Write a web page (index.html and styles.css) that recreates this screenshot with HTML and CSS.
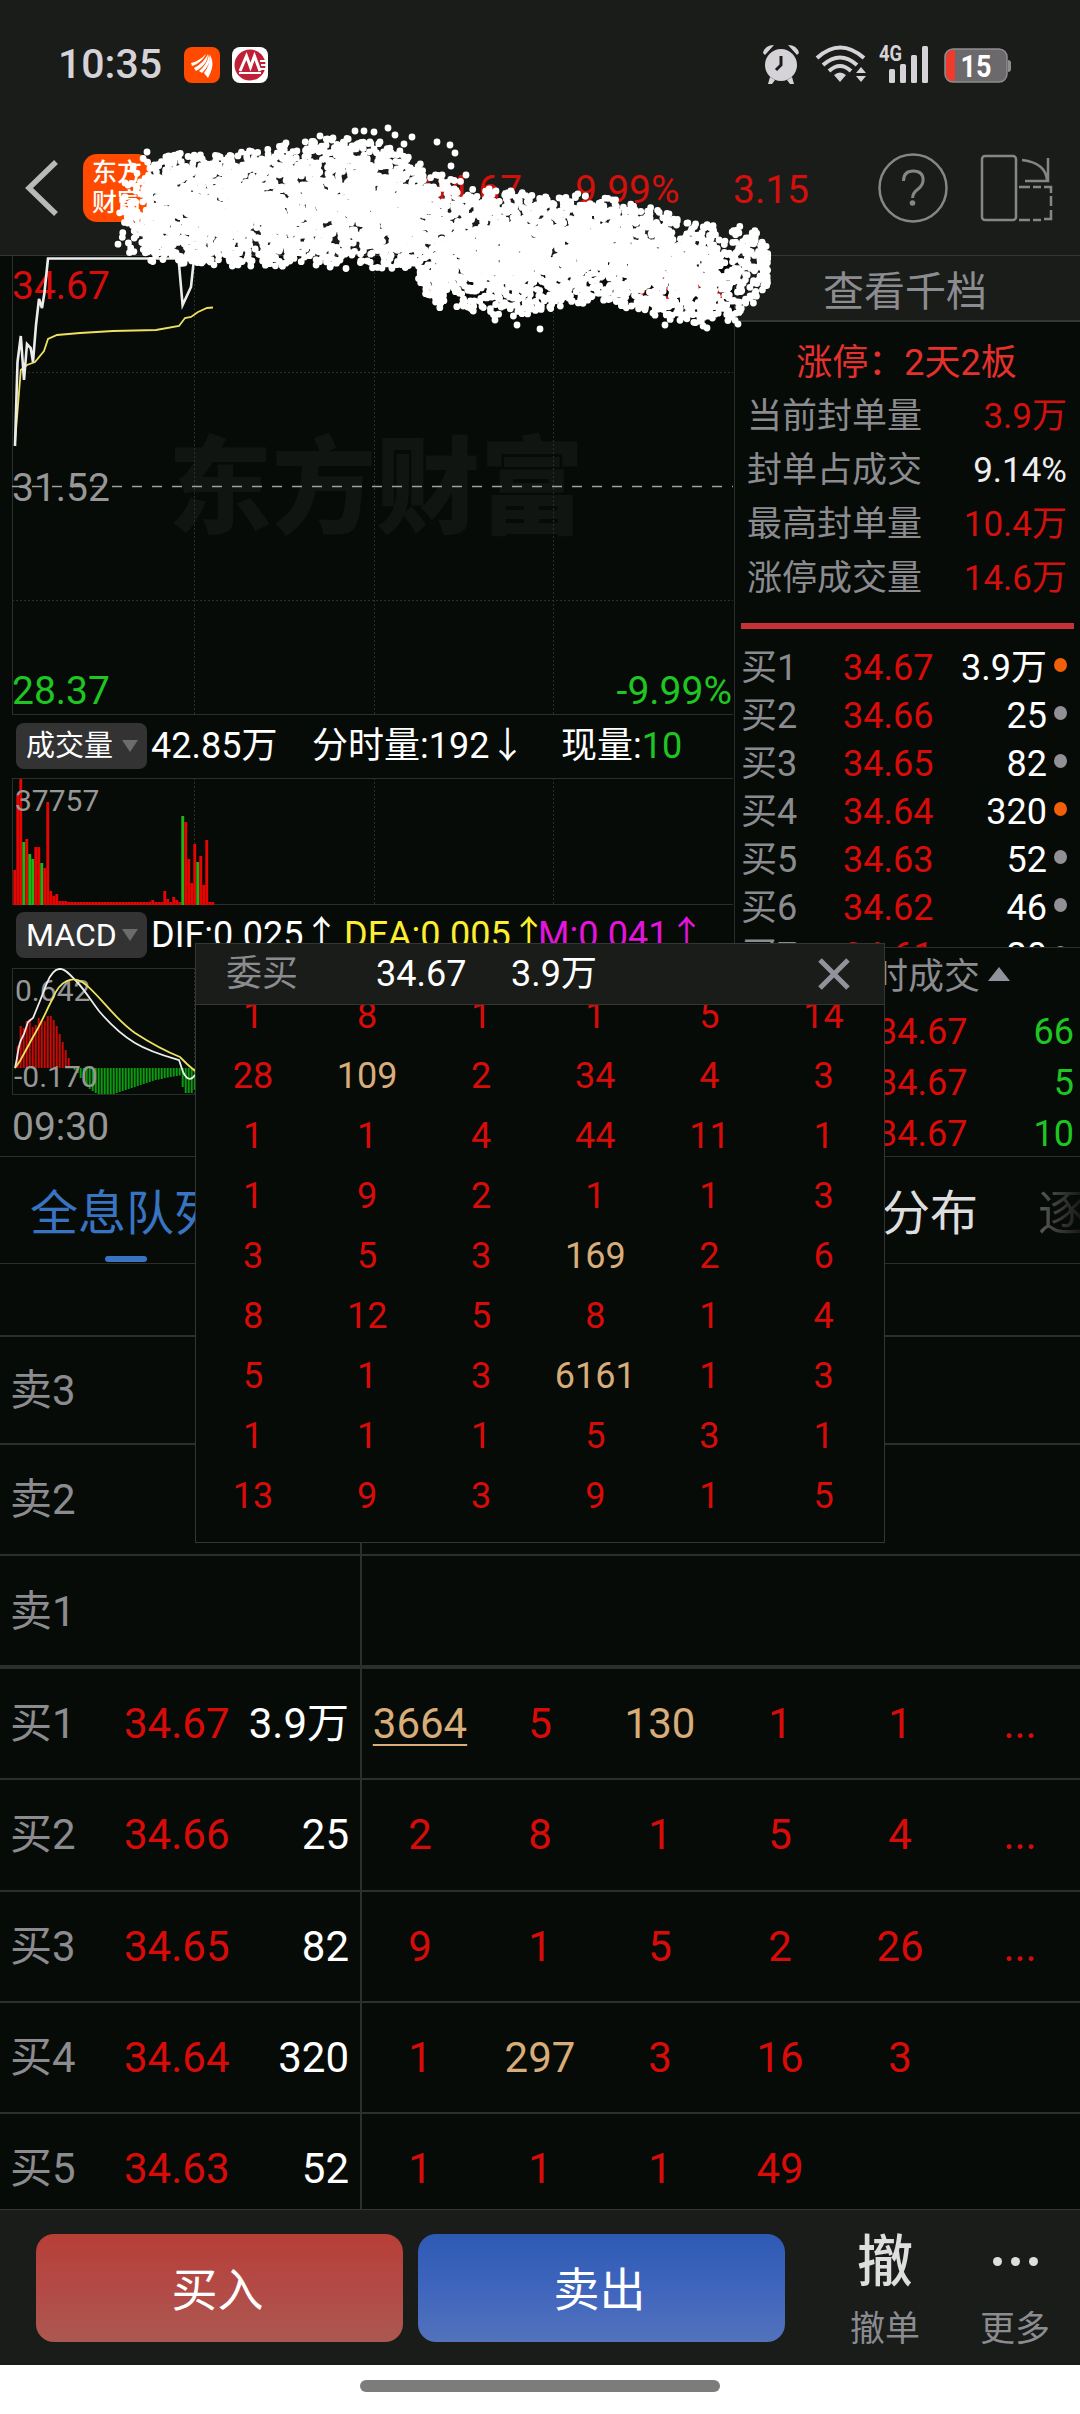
FILE: index.html
```html
<!DOCTYPE html>
<html lang="zh-CN">
<head>
  <meta charset="UTF-8" />
  <meta name="viewport" content="width=device-width, initial-scale=1.0"/>
  <title>东方财富 - 分时</title>
  <link rel="stylesheet" href="styles.css">
</head>
<body>
<div class="screen">

  <div class="status">
    <span class="time">10:35</span>
    <svg class="app-icon" width="36" height="36" viewBox="0 0 36 36">
      <rect width="36" height="36" rx="8" fill="#ff4a00"/>
      <path fill="#fff" d="M7 16c5-1 10-4 15-9-3 6-8 10-14 12zM10 21c6-3 11-8 14-14 0 7-5 13-12 17zM15 24c5-4 9-10 10-17 2 7-1 13-7 19zM20 26c4-5 6-11 6-18 4 7 3 14-2 23z"/>
    </svg>
    <svg class="app-icon" width="36" height="36" viewBox="0 0 36 36">
      <rect width="36" height="36" rx="8" fill="#fff"/>
      <circle cx="18" cy="18" r="15.500" fill="#c01f38"/>
      <path d="M8 24L14.500 9 18.500 20 22.500 9 28 24" fill="none" stroke="#fff" stroke-width="3"/>
      <path d="M7 26h22M28 14h6M29 18h5M28 22h6" stroke="#fff" stroke-width="1.800"/>
    </svg>
    <div class="status-right">
      <svg width="38" height="40" viewBox="0 0 38 40" fill="#d6d3d8">
        <circle cx="19" cy="21" r="16"/>
        <path d="M1 9Q3 1 12 1L3 11zM37 9Q35 1 26 1l9 10zM8 33l5 3-3 4H6zM30 33l-5 3 3 4h4z"/>
        <path d="M19 12v9l-5 5" fill="none" stroke="#191c19" stroke-width="3"/>
      </svg>
      <svg width="52" height="40" viewBox="0 0 52 40" fill="none" stroke="#d6d3d8" stroke-width="4">
        <path d="M2 14Q25-7 49 14M8 21q17-15 34 0M14 27q11-10 22 0"/>
        <path d="M19 31q6-5 12 0l-6 7zM41 29l5-6 5 6zM41 32h10l-5 6z" fill="#d6d3d8" stroke="none"/>
      </svg>
      <svg width="50" height="40" viewBox="0 0 50 40" fill="#d6d3d8">
        <rect x="10" y="25" width="6" height="14" rx="1.500"/>
        <rect x="21" y="20" width="6" height="19" rx="1.500"/>
        <rect x="32" y="11" width="6" height="28" rx="1.500"/>
        <rect x="43" y="2" width="6" height="37" rx="1.500"/>
        <text x="0" y="17" font-size="22" font-weight="700" textLength="23" lengthAdjust="spacingAndGlyphs">4G</text>
      </svg>
      <svg class="battery" width="68" height="36" viewBox="0 0 68 36">
        <rect x="1" y="1" width="62" height="33" rx="8" fill="#6b696c" stroke="#8f8d90" stroke-width="1.500"/>
        <path d="M11 2H9a7 7 0 0 0-7 7v17a7 7 0 0 0 7 7h2z" fill="#f03a2c"/>
        <path d="M64 12q3 0 3 3v6q0 3-3 3z" fill="#8f8d90"/>
        <text x="32" y="29" font-size="31" font-weight="700" fill="#fff" text-anchor="middle" textLength="31" lengthAdjust="spacingAndGlyphs">15</text>
      </svg>
    </div>
  </div>

  <header class="header">
    <svg class="back" width="34" height="58" viewBox="0 0 34 58"><path d="M31 3L4 29l27 26" fill="none" stroke="#b9b9b9" stroke-width="5.500"/></svg>
    <div class="logo">东方<br>财富</div>
    <span class="quote price">34.67</span>
    <span class="quote percent">9.99%</span>
    <span class="quote change">3.15</span>
    <svg class="help" width="70" height="72" viewBox="0 0 70 72" fill="none" stroke="#868686" stroke-width="2.500">
      <circle cx="35" cy="36" r="33.500"/>
      <path d="M25.500 29q0-10 9.800-10t9.800 9q0 5-5 9-5.500 4-5.500 9" stroke-width="3"/>
      <circle cx="34.500" cy="51" r="2.800" fill="#868686" stroke="none"/>
    </svg>
    <svg class="rotate" width="76" height="72" viewBox="0 0 76 72" fill="none" stroke="#868686" stroke-width="2.500">
      <rect x="3" y="4" width="34" height="64" rx="3"/>
      <path d="M43 8q25 3 25 22M69 6v23H46"/>
      <path d="M40 35h11M54 35h8M65 35h7v6M72 44v10M72 58v9h-7M62 68h-8M51 68H40"/>
    </svg>
  </header>

  <main class="market">
    <section class="charts">
      <svg class="price-chart" width="735" height="460">
        <text class="watermark" x="168" y="269" textLength="416" lengthAdjust="spacingAndGlyphs">东方财富</text>
        <g class="grid">
          <path d="M12.500 0V459M12 458.500H733"/>
          <path class="dots" d="M194.500 0V458M374.500 0V458M553.500 0V458M12 116.500H733M12 344.500H733"/>
        </g>
        <path d="M12 230.500H733" stroke="#a0a0a0" stroke-width="1.500" stroke-dasharray="10 10"/>
        <polyline class="avg" points="15,187 20.800,114 27,109 35,106 44,95 48,83 57,79 80,77 113,75 156,74 179,70 185,62 191,61 198,56 207,52 213,51.500"/>
        <text x="12" y="43" class="up">34.67</text>
        <text x="731" y="43" class="up" text-anchor="end">9.99%</text>
        <text x="12" y="245" class="flat">31.52</text>
        <text x="12" y="448" class="down">28.37</text>
        <text x="732" y="448" class="down" text-anchor="end">-9.99%</text>
        <polyline class="line" points="15,190 17.500,106 20.800,80 24,124 27,88 30.700,92 33,106 36,69 39,43 42,52 44.400,37 48,2.500 178.500,2.500 182.600,49 191,31 194,2.500 212,2.500"/>
      </svg>
      <div class="info">
        <span class="picker">成交量<i></i></span>
        <span class="vol-total">42.85万</span>
        <span class="vol-min">分时量:192↓</span>
        <span>现量:<b class="green">10</b></span>
      </div>
      <svg class="sub-chart" width="735" height="128">
        <g class="grid">
          <path d="M12.500 0V127M12 .5H733M12 126.500H733"/>
          <path class="dots" d="M194.500 0V127M374.500 0V127M553.500 0V127"/>
        </g>
        <g id="volBars"></g>
        <text x="15" y="33" class="flat">37757</text>
      </svg>
      <div class="info info-macd">
        <span class="picker picker-latin">MACD<i></i></span>
        <span class="dif">DIF:0.025↑</span>
        <span class="dea">DEA:0.005↑</span>
        <span class="macd">M:0.041↑</span>
      </div>
      <svg class="sub-chart" width="735" height="128">
        <g class="grid">
          <path d="M12.500 0V127M12 .5H733M12 126.500H733"/>
          <path class="dots" d="M194.500 0V127"/>
        </g>
        <g id="macdBars"></g>
        <text x="15" y="33" class="flat">0.642</text>
        <text x="14" y="119" class="flat">-0.170</text>
        <path class="line thin" d="M15 100C18 88 18 76 22 70L24 66 28 54 33 50C38 38 42 28 47 15 51 5 55 1 60 .8 66 1 71 8 77 14 83 20 90 31 99 43 110 56 120 66 135 75 150 84 165 88 179 92L183 104C187 112 191 113 195 107"/>
        <path class="avg thin" d="M15 100L20 93 33 69C42 54 47 41 53 30 60 12 73 8 82 14 96 22 112 49 135 65 152 76 165 83 180 89L187 96 195 103"/>
      </svg>
      <div class="axis">09:30</div>
    </section>

    <aside class="side">
      <div class="depth-btn">查看千档</div>
      <div class="limit-title">涨停：2天2板</div>
      <dl class="limit">
        <div><dt>当前封单量</dt><dd>3.9万</dd></div>
        <div><dt>封单占成交</dt><dd class="white">9.14%</dd></div>
        <div><dt>最高封单量</dt><dd>10.4万</dd></div>
        <div><dt>涨停成交量</dt><dd>14.6万</dd></div>
      </dl>
      <div class="red-bar"></div>
      <div class="bids">
        <div class="bid"><span>买1</span><em>34.67</em><b>3.9万</b><i class="hot"></i></div>
        <div class="bid"><span>买2</span><em>34.66</em><b>25</b><i></i></div>
        <div class="bid"><span>买3</span><em>34.65</em><b>82</b><i></i></div>
        <div class="bid"><span>买4</span><em>34.64</em><b>320</b><i class="hot"></i></div>
        <div class="bid"><span>买5</span><em>34.63</em><b>52</b><i></i></div>
        <div class="bid"><span>买6</span><em>34.62</em><b>46</b><i></i></div>
        <div class="bid"><span>买7</span><em>34.61</em><b>20</b><i></i></div>
      </div>
      <div class="trades-title">分时成交<i></i></div>
      <div class="trade"><em>34.67</em><b>66</b></div>
      <div class="trade"><em>34.67</em><b>5</b></div>
      <div class="trade"><em>34.67</em><b>10</b></div>
    </aside>
  </main>

  <nav class="tabs">
    <span class="tab active">全息队列</span>
    <span class="tab second">分布</span>
    <span class="tab faded">逐笔</span>
  </nav>

  <section class="queue">
    <div class="row row-cut"><div class="left"></div></div>
    <div class="row sell3"><div class="left"><span>卖3</span></div></div>
    <div class="row"><div class="left"><span>卖2</span></div></div>
    <div class="row last-sell"><div class="left"><span>卖1</span></div></div>
    <div class="row">
      <div class="left"><span>买1</span><em>34.67</em><b>3.9万</b></div>
      <div class="cells"><u class="big">3664</u><span>5</span><span class="big">130</span><span>1</span><span>1</span><span>...</span></div>
    </div>
    <div class="row">
      <div class="left"><span>买2</span><em>34.66</em><b>25</b></div>
      <div class="cells"><span>2</span><span>8</span><span>1</span><span>5</span><span>4</span><span>...</span></div>
    </div>
    <div class="row">
      <div class="left"><span>买3</span><em>34.65</em><b>82</b></div>
      <div class="cells"><span>9</span><span>1</span><span>5</span><span>2</span><span>26</span><span>...</span></div>
    </div>
    <div class="row">
      <div class="left"><span>买4</span><em>34.64</em><b>320</b></div>
      <div class="cells"><span>1</span><span class="big">297</span><span>3</span><span>16</span><span>3</span></div>
    </div>
    <div class="row">
      <div class="left"><span>买5</span><em>34.63</em><b>52</b></div>
      <div class="cells"><span>1</span><span>1</span><span>1</span><span>49</span></div>
    </div>
  </section>

  <footer class="toolbar">
    <button class="buy">买入</button>
    <button class="sell">卖出</button>
    <div class="tool"><span class="glyph">撤</span><span>撤单</span></div>
    <div class="tool more"><span class="glyph"><i></i><i></i><i></i></span><span>更多</span></div>
  </footer>
  <div class="home"><i></i></div>

  <div class="popup">
    <div class="popup-head">
      <span class="popup-title">委买</span>
      <span class="popup-price">34.67</span>
      <span>3.9万</span>
      <svg class="close" width="34" height="34" viewBox="0 0 34 34"><path d="M3 3l28 28M31 3L3 31" stroke="#92939a" stroke-width="5"/></svg>
    </div>
    <div class="popup-body">
      <span>1</span><span>8</span><span>1</span><span>1</span><span>5</span><span>14</span>
      <span>28</span><span class="big">109</span><span>2</span><span>34</span><span>4</span><span>3</span>
      <span>1</span><span>1</span><span>4</span><span>44</span><span>11</span><span>1</span>
      <span>1</span><span>9</span><span>2</span><span>1</span><span>1</span><span>3</span>
      <span>3</span><span>5</span><span>3</span><span class="big">169</span><span>2</span><span>6</span>
      <span>8</span><span>12</span><span>5</span><span>8</span><span>1</span><span>4</span>
      <span>5</span><span>1</span><span>3</span><span class="big">6161</span><span>1</span><span>3</span>
      <span>1</span><span>1</span><span>1</span><span>5</span><span>3</span><span>1</span>
      <span>13</span><span>9</span><span>3</span><span>9</span><span>1</span><span>5</span>
    </div>
  </div>

  <svg class="spray" width="1080" height="360"><path id="spray" /></svg>
</div>
<script src="script.js"></script>
</body>
</html>
```

FILE: styles.css
```css
* {
  box-sizing: border-box;
}

body {
  margin: 0;
  background: #070b07;
  color: #fff;
  font-family: Roboto, "Noto Sans CJK SC", sans-serif;
  font-size: 36px;
}

.screen {
  position: relative;
  width: 1080px;
  height: 2414px;
  overflow: hidden;
  display: flex;
  flex-direction: column;
}

i, em {
  font-style: normal;
}

b {
  font-weight: 400;
}

svg text {
  font-family: Roboto, "Noto Sans CJK SC", sans-serif;
}

/* status bar */
.status {
  height: 120px;
  padding: 10px 69px 0 58px;
  display: flex;
  align-items: center;
  background: #191c19;
}

.time {
  width: 126px;
  font-size: 41px;
  line-height: 48px;
  font-weight: 500;
  color: #d6d3d8;
  padding-bottom: 2px;
}

.app-icon {
  margin-right: 12px;
}

.status-right {
  display: flex;
  align-items: center;
  margin-left: auto;
  margin-top: -2px;
  gap: 15px;
}

.status-right svg:nth-child(3) {
  margin-left: -3px;
}

.battery {
  margin: 4px -1px 0 0;
}

/* header */
.header {
  height: 137px;
  padding: 1px 22px 0 25px;
  display: flex;
  align-items: center;
  background: #191c19;
  border-bottom: 1px solid #343634;
}

.logo {
  width: 68px;
  height: 68px;
  margin-left: 24px;
  padding: 4px 9px;
  border-radius: 14px;
  background: #ff4a00;
  font-size: 25px;
  line-height: 30px;
  font-weight: 500;
  white-space: nowrap;
}

.quote {
  color: #d2100c;
  font-size: 39px;
  padding-top: 5px;
  width: 151px;
}

.quote.price {
  margin-left: 273px;
}

.quote.percent {
  width: 158px;
}

.help {
  margin-left: auto;
}

.rotate {
  margin-left: 31px;
  margin-right: 3px;
}

.quote.change {
  width: 90px;
}

/* charts */
.market {
  display: flex;
  height: 901px;
  border-bottom: 1px solid #2c2e2c;
}

.charts {
  width: 735px;
  border-right: 1px solid #2c2e2c;
}

.charts svg {
  display: block;
}

.price-chart text {
  font-size: 39px;
}

.price-chart .watermark {
  font-size: 106px;
  font-weight: 900;
  fill: #111511;
}

.grid path {
  fill: none;
  stroke: #2c2e2c;
}

.grid .dots {
  stroke-dasharray: 2 2;
}

.up {
  fill: #d50e0b;
}

.flat {
  fill: #979797;
}

.down {
  fill: #1fc622;
}

.line {
  fill: none;
  stroke: #ececec;
  stroke-width: 2.6;
}

.avg {
  fill: none;
  stroke: #eee060;
  stroke-width: 1.8;
}

.thin {
  stroke-width: 1.8;
}

.info {
  height: 62px;
  padding: 0 0 2px 16px;
  display: flex;
  align-items: center;
  line-height: 60px;
  white-space: nowrap;
}

.info-macd {
  padding-bottom: 5px;
}

.picker {
  width: 131px;
  height: 46px;
  margin-right: 4px;
  padding-left: 10px;
  border-radius: 8px;
  background: #333;
  font-size: 29px;
  line-height: 46px;
  display: flex;
  align-items: center;
  flex: none;
}

.picker-latin {
  font-size: 32px;
}

.picker i {
  margin-left: auto;
  margin-right: 9px;
  border: 8px solid transparent;
  border-top: 12px solid #6a6d6a;
  border-bottom: 0;
}

.vol-total {
  width: 161px;
}

.vol-min {
  width: 249px;
}

.green {
  color: #1fc622;
}

.sub-chart text {
  font-size: 30px;
}

.dif {
  width: 193px;
}

.dea {
  width: 194px;
  color: #fdee30;
}

.macd {
  color: #e414dc;
}

.axis {
  padding-left: 12px;
  font-size: 39px;
  line-height: 63px;
  color: #979797;
}

/* right column */
.side {
  width: 345px;
}

.depth-btn {
  height: 66px;
  background: #191c19;
  border-bottom: 2px solid #343634;
  color: #8b8b90;
  font-size: 41px;
  line-height: 72px;
  text-align: center;
  padding-right: 5px;
}

.limit-title {
  padding: 14px 2px 0 0;
  color: #e5302c;
  line-height: 54px;
  text-align: center;
  height: 68px;
}

.limit {
  margin: 0;
  font-size: 35px;
}

.limit div {
  display: flex;
  justify-content: space-between;
  padding: 0 13px 0 12px;
  line-height: 54px;
}

.limit dt {
  color: #8b8b90;
}

.limit dd {
  margin: 0;
  color: #d2100c;
}

.limit .white {
  color: #eee;
}

.red-bar {
  height: 6px;
  margin: 17px 6px 15px 6px;
  background: #c43236;
}

.bids {
  height: 304px;
  overflow: hidden;
  border-bottom: 1px solid #2c2e2c;
}

.bid {
  display: flex;
  align-items: center;
  padding: 0 13px 0 6px;
  line-height: 48px;
}

.bid span {
  width: 102px;
  color: #8b8b90;
}

.bid em,
.trade em {
  color: #d90b08;
}

.bid b {
  margin-left: auto;
}

.bid i {
  width: 13px;
  height: 14px;
  margin: 0 0 6px 7px;
  border-radius: 50%;
  background: #909096;
}

.bid .hot {
  background: #f0600a;
}

.trades-title {
  display: flex;
  align-items: center;
  height: 59px;
  line-height: 59px;
  padding-left: 101px;
  color: #8b8b90;
}

.trades-title i {
  margin: 0 0 8px 8px;
  border: 11px solid transparent;
  border-bottom: 14px solid #92939a;
  border-top: 0;
}

.trade {
  display: flex;
  justify-content: space-between;
  padding: 0 6px 0 142px;
  line-height: 51px;
}

.trade b {
  color: #1fc622;
}

/* tabs */
.tabs {
  height: 107px;
  display: flex;
  padding-left: 30px;
  border-bottom: 1px solid #2c2e2c;
  font-size: 48px;
  line-height: 113px;
  white-space: nowrap;
  overflow: hidden;
}

.tab {
  position: relative;
  color: #dedede;
}

.active {
  width: 192px;
  color: #3874c2;
}

.active::after {
  content: "";
  position: absolute;
  left: 75px;
  bottom: 1px;
  width: 42px;
  height: 6px;
  border-radius: 3px;
  background: #3874c2;
}

.second {
  margin-left: 660px;
}

.faded {
  margin-left: 60px;
  background: linear-gradient(90deg, #5a5a5a, #111 48px);
  background-clip: text;
  -webkit-background-clip: text;
  color: transparent;
}

/* order queue */
.queue {
  flex: none;
  height: 945px;
  overflow: hidden;
  font-size: 42px;
}

.row {
  display: flex;
  height: 111.3px;
  border-bottom: 2px solid #2d2f2d;
  line-height: 110px;
}

.row-cut {
  height: 73px;
}

.sell3 {
  height: 108px;
  line-height: 108px;
}

.last-sell {
  height: 113px;
  border-bottom-width: 4px;
  line-height: 112px;
}

.left {
  width: 362px;
  padding: 0 11px 0 10px;
  border-right: 2px solid #2d2f2d;
  display: flex;
}

.left span {
  width: 114px;
  color: #8b8b90;
}

.left em {
  color: #d90b08;
}

.left b {
  margin-left: auto;
}

.cells {
  display: grid;
  grid-template-columns: repeat(6, 120px);
  margin-left: -2px;
  justify-items: center;
  color: #d90b08;
}

.cells u {
  text-decoration-thickness: 2px;
  text-underline-offset: 6px;
}

.cells .big,
.popup .big {
  color: #d8ad7a;
}

/* bottom bar */
.toolbar {
  height: 157px;
  padding: 24px 0 0 36px;
  display: flex;
  background: #191c19;
  border-top: 1px solid #343634;
}

.toolbar button {
  width: 367px;
  height: 108px;
  margin-right: 15px;
  padding: 0 4px 3px 0;
  border: none;
  border-radius: 18px;
  color: #fff;
  font-family: inherit;
  font-size: 46px;
}

.buy {
  background: linear-gradient(#b73f37, #b34a46 50%, #ab5850);
}

.sell {
  background: linear-gradient(#2e5ab4, #3f65bd 50%, #5272bb);
}

.tool {
  width: 130px;
  margin-left: 20px;
  display: flex;
  flex-direction: column;
  align-items: center;
  color: #8b8b90;
  font-size: 35px;
  line-height: 46px;
}

.glyph {
  display: flex;
  align-items: center;
  gap: 9px;
  height: 54px;
  margin-bottom: 19px;
  padding-top: 2px;
  font-size: 56px;
  font-weight: 500;
  color: #dedede;
}

.more {
  margin-left: 0;
}

.glyph i {
  width: 9px;
  height: 9px;
  border-radius: 50%;
  background: #dedede;
}

.home {
  height: 49px;
  padding-top: 15px;
  background: #fff;
}

.home i {
  display: block;
  width: 360px;
  height: 12px;
  margin: 0 auto;
  border-radius: 6px;
  background: #7c7d7a;
}

/* queue detail popup */
.popup {
  position: absolute;
  left: 195px;
  top: 943px;
  width: 690px;
  height: 600px;
  background: #070b07;
  border: 1px solid #343634;
  overflow: hidden;
}

.popup-head {
  height: 61px;
  padding: 0 33px 0 30px;
  display: flex;
  align-items: center;
  background: #191c19;
  border-bottom: 1px solid #343634;
  line-height: 60px;
}

.popup-title {
  width: 150px;
  color: #8b8b90;
}

.popup-price {
  width: 135px;
}

.close {
  margin-left: auto;
}

.popup-body {
  height: 537px;
  overflow: hidden;
  display: grid;
  grid-template-columns: repeat(6, 114.1px);
  grid-auto-rows: 60px;
  align-content: end;
  padding-bottom: 16px;
  line-height: 60px;
  text-align: center;
  color: #d90b08;
}

/* white brush over the stock name */
.spray {
  position: absolute;
  left: 0;
  top: 0;
}

.spray path {
  fill: none;
  stroke: #fff;
  stroke-width: 6.8;
  stroke-linecap: round;
}
```

FILE: script.js
```javascript
const RED = "#e60500";
const GREEN = "#1fb416";

function bar(x, y, w, h, color) {
  return `<rect x="${x}" y="${y}" width="${w}" height="${h}" fill="${color}"/>`;
}

// volume per minute, in px
const volumes = [35, 110, 126, 63, 66, 51, 46, 58, 58, 42, 37, 103, 14, 9, 11, 4, 4, 4];
while (volumes.length < 56) volumes.push(3);
volumes[46] = 5;
volumes[50] = 14;
volumes[51] = 6;
volumes[53] = 8;
volumes[54] = 5;
volumes.push(89, 83, 46, 22, 61, 43, 49, 20, 65, 3, 3);
const greenMinutes = [3, 5, 6, 9, 56, 61];

document.getElementById("volBars").innerHTML = volumes
  .map((v, i) => bar(13.3 + i * 3, 127 - v, 2.9, v, greenMinutes.includes(i) ? GREEN : RED))
  .join("");

// MACD histogram, positive above the zero line
const hist = [22, 42, 40, 47, 49, 41, 43, 50, 48, 47, 52, 52, 48, 42, 34, 26, 18, 10, 1,
  -2, -5, -10, -14, -18, -21, -23, -25, -26, -26, -26, -26, -26, -26, -25, -24, -23, -22, -21, -20,
  -19, -18, -17, -16, -15, -14, -13, -12, -11.5, -11, -10, -9.5, -9, -8.5, -8, -7.5, -19, -25, -25, -25, -22];

document.getElementById("macdBars").innerHTML = hist
  .map((v, i) => bar(16.7 + i * 3, v > 0 ? 100 - v : 100, 2, Math.abs(v), v > 0 ? "#c80a06" : "#0b9a10"))
  .join("");

// brush dots: upper and lower edge of the stroke
const edge = [
  [118, 178, 245], [132, 162, 256], [150, 154, 262], [200, 153, 265], [260, 150, 267], [300, 142, 268],
  [345, 136, 269], [385, 142, 268], [412, 156, 272], [430, 170, 306], [470, 184, 313], [530, 194, 318],
  [570, 192, 303], [620, 200, 306], [660, 210, 318], [700, 224, 327], [735, 222, 322], [758, 230, 304],
  [768, 250, 290]
];
let seed = 7;
function rnd() {
  seed = (seed * 16807) % 2147483647;
  return seed / 2147483647;
}

let d = "";
for (let i = 0; i < 6600; i++) {
  const x = 118 + rnd() * 650;
  let k = 0;
  while (k < edge.length - 2 && edge[k + 1][0] < x) k++;
  const a = edge[k], b = edge[k + 1];
  const t = (x - a[0]) / (b[0] - a[0]);
  const top = a[1] + (b[1] - a[1]) * t;
  const bottom = a[2] + (b[2] - a[2]) * t;
  // thinner towards both ends and along the edges
  if ((x < 145 && rnd() > 0.22) || (x > 715 && rnd() > 0.4)) continue;
  const u = rnd() < 0.4 ? rnd() : (rnd() + rnd()) / 2;
  d += `M${x.toFixed(1)} ${(top + (bottom - top) * u).toFixed(1)}h.01`;
}
[[388, 128], [395, 135], [412, 137], [404, 144], [437, 142], [450, 145], [455, 153], [451, 166], [466, 175],
 [320, 136], [333, 138], [355, 131], [364, 131], [374, 132], [286, 143], [147, 152],
 [495, 320], [517, 325], [540, 329], [665, 325], [707, 328], [738, 324]].forEach(p => {
  d += `M${p[0]} ${p[1]}h.01`;
});
document.getElementById("spray").setAttribute("d", d);
```
